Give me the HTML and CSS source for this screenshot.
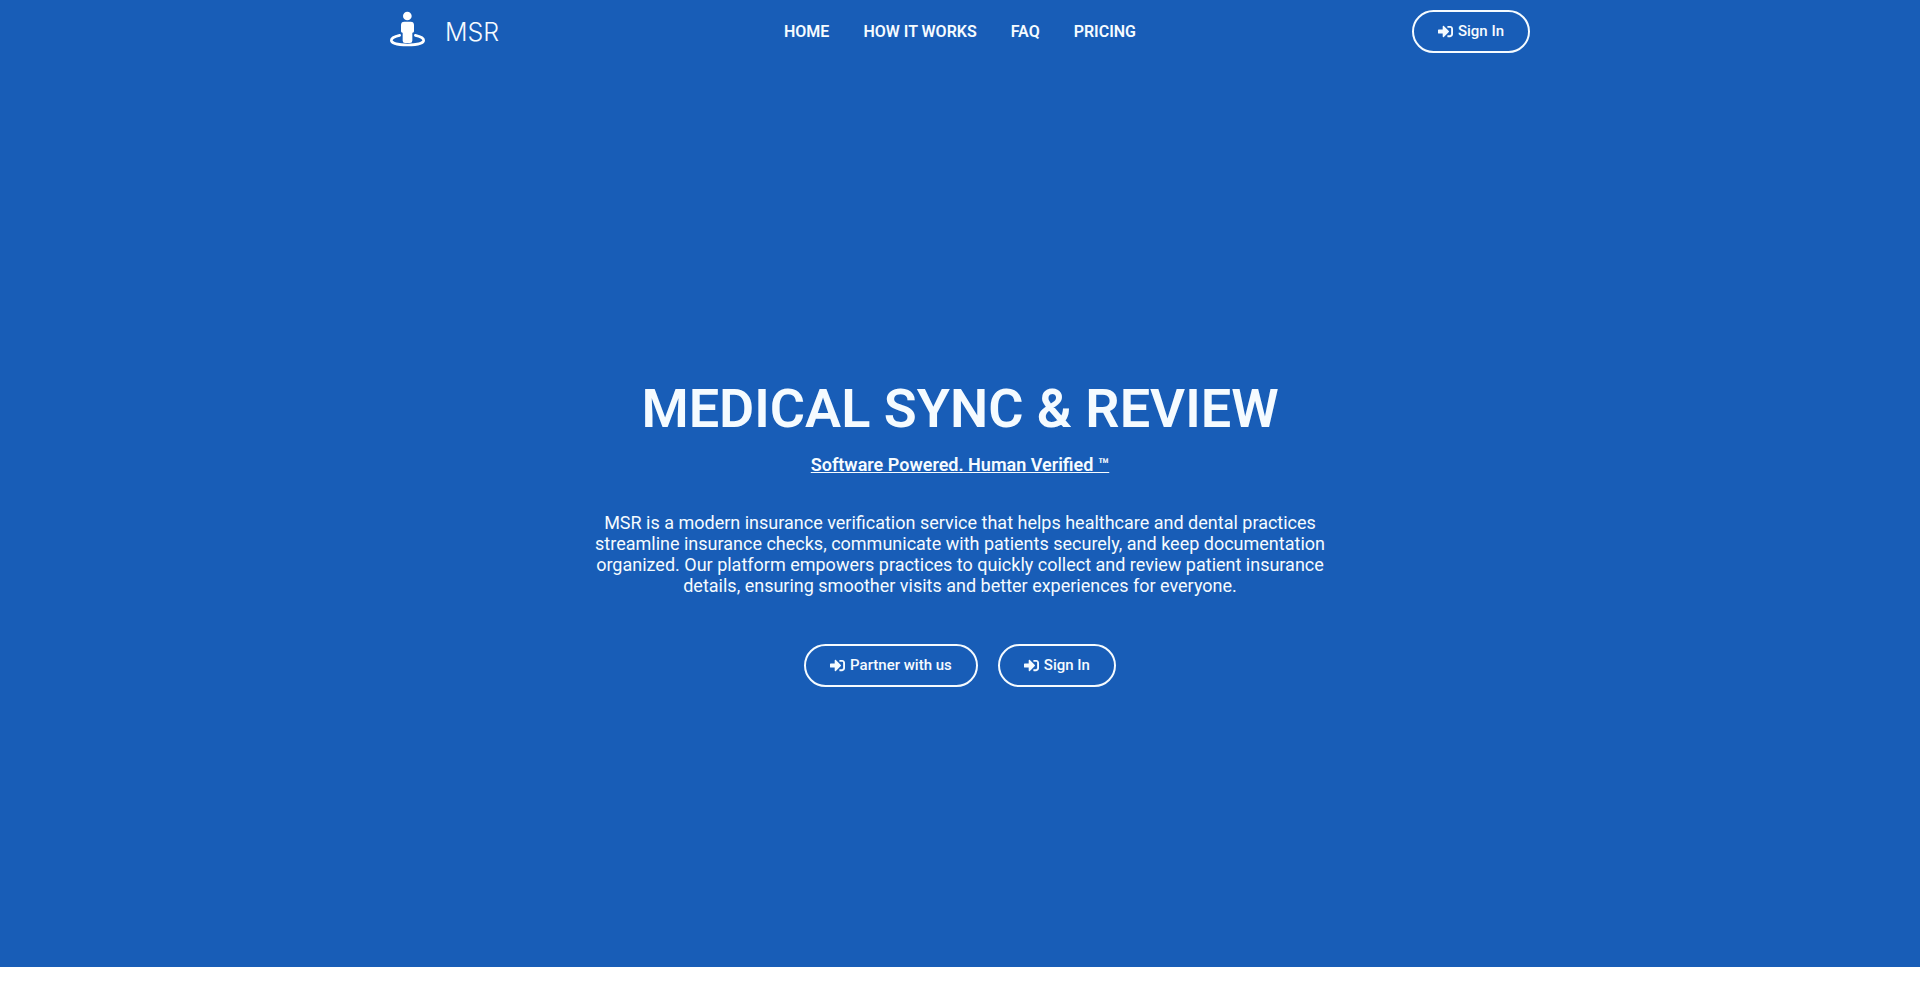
FILE: index.html
```html
<!DOCTYPE html>
<html lang="en">
<head>
    <meta charset="UTF-8">
    <meta name="viewport" content="width=device-width, initial-scale=1.0">
    <title>MSR - Medical Sync &amp; Review</title>
    <link rel="stylesheet" href="styles.css">
</head>
<body>
    <!-- Shared icon -->
    <svg class="sprite" aria-hidden="true">
        <symbol id="icon-sign-in" viewBox="0 0 512 512">
            <path d="M416 448h-84c-6.600 0-12-5.400-12-12v-40c0-6.600 5.400-12 12-12h84c17.700 0 32-14.300 32-32V160c0-17.700-14.300-32-32-32h-84c-6.600 0-12-5.400-12-12V76c0-6.600 5.400-12 12-12h84c53 0 96 43 96 96v192c0 53-43 96-96 96zm-47-209L201 71c-15-15-41-4.500-41 17v96H24c-13.300 0-24 10.700-24 24v96c0 13.300 10.700 24 24 24h136v96c0 21.500 26 32 41 17l168-168c9.300-9.400 9.300-24.600 0-34z"/>
        </symbol>
    </svg>

    <div class="page">
        <header class="header">
            <a class="logo" href="#">
                <svg class="logo-mark" viewBox="0 0 105 106" aria-hidden="true">
                    <path class="logo-ring" d="M29 72C15 75 4 80 4 87C4 96 26 101 52.500 101S101 96 101 87C101 80 90 75 76 72"/>
                    <circle cx="52" cy="14" r="13"/>
                    <path d="M43 31H62Q72 31 72 41V60Q72 64 68 64H67V88Q67 95 60 95H45Q38 95 38 88V64H37Q33 64 33 60V41Q33 31 43 31Z"/>
                </svg>
                <span class="logo-text">MSR</span>
            </a>
            <nav class="nav">
                <a href="#">HOME</a>
                <a href="#">HOW IT WORKS</a>
                <a href="#">FAQ</a>
                <a href="#">PRICING</a>
            </nav>
            <div class="header-action">
                <a class="btn" href="#"><svg class="btn-icon" aria-hidden="true"><use href="#icon-sign-in"/></svg>Sign In</a>
            </div>
        </header>

        <main class="hero">
            <h1>MEDICAL SYNC &amp; REVIEW</h1>
            <h2>Software Powered. Human Verified ™</h2>
            <p>MSR is a modern insurance verification service that helps healthcare and dental practices streamline insurance checks, communicate with patients securely, and keep documentation organized. Our platform empowers practices to quickly collect and review patient insurance details, ensuring smoother visits and better experiences for everyone.</p>
            <div class="hero-buttons">
                <a class="btn" href="#"><svg class="btn-icon" aria-hidden="true"><use href="#icon-sign-in"/></svg>Partner with us</a>
                <a class="btn" href="#"><svg class="btn-icon" aria-hidden="true"><use href="#icon-sign-in"/></svg>Sign In</a>
            </div>
        </main>
    </div>
</body>
</html>
```

FILE: styles.css
```css
/* General */
* {
    box-sizing: border-box;
}

body {
    margin: 0;
    font-family: Roboto, sans-serif;
    color: #f5fbff;
    background-color: #fff;
}

a {
    color: inherit;
    text-decoration: none;
}

.sprite {
    display: none;
}

.page {
    display: flex;
    flex-direction: column;
    min-height: calc(100vh - 26px);
    background-color: #185db7;
}

/* Header */
.header {
    display: grid;
    grid-template-columns: 1fr auto 1fr;
    align-items: center;
    width: 100%;
    max-width: 1140px;
    margin: 0 auto;
    padding: 10px 0;
}

.logo {
    display: flex;
    align-items: center;
    gap: 20px;
}

.logo-mark {
    width: 35px;
    height: 36px;
    margin-bottom: 5px;
    fill: #fff;
}

.logo-ring {
    fill: none;
    stroke: #fff;
    stroke-width: 8;
    stroke-linecap: round;
}

.logo-text {
    font-family: Inter, sans-serif;
    font-size: 25px;
    font-weight: 300;
    line-height: 24px;
}

.nav {
    display: flex;
    gap: 34px;
    font-size: 16px;
    font-weight: 600;
    line-height: 20px;
}

.header-action {
    text-align: right;
}

/* Buttons */
.btn {
    display: inline-flex;
    align-items: center;
    gap: 5px;
    padding: 12px 24px;
    border: 2px solid #f5fbff;
    border-radius: 24px;
    font-size: 15px;
    font-weight: 500;
    line-height: 15px;
    vertical-align: top;
}

.btn-icon {
    width: 15px;
    height: 15px;
    fill: currentColor;
}

/* Hero */
.hero {
    flex: 1;
    display: flex;
    flex-direction: column;
    align-items: center;
    justify-content: center;
    padding-top: 38px;
    text-align: center;
}

h1 {
    margin: 0;
    font-size: 54px;
    font-weight: 600;
    line-height: 54px;
}

h2 {
    margin: 20px 0 0;
    font-size: 18px;
    font-weight: 600;
    line-height: 18px;
    text-decoration: underline;
}

p {
    max-width: 740px;
    margin: 38px 0 0;
    font-size: 18px;
    line-height: 21px;
}

.hero-buttons {
    display: flex;
    gap: 20px;
    margin-top: 48px;
}
```
